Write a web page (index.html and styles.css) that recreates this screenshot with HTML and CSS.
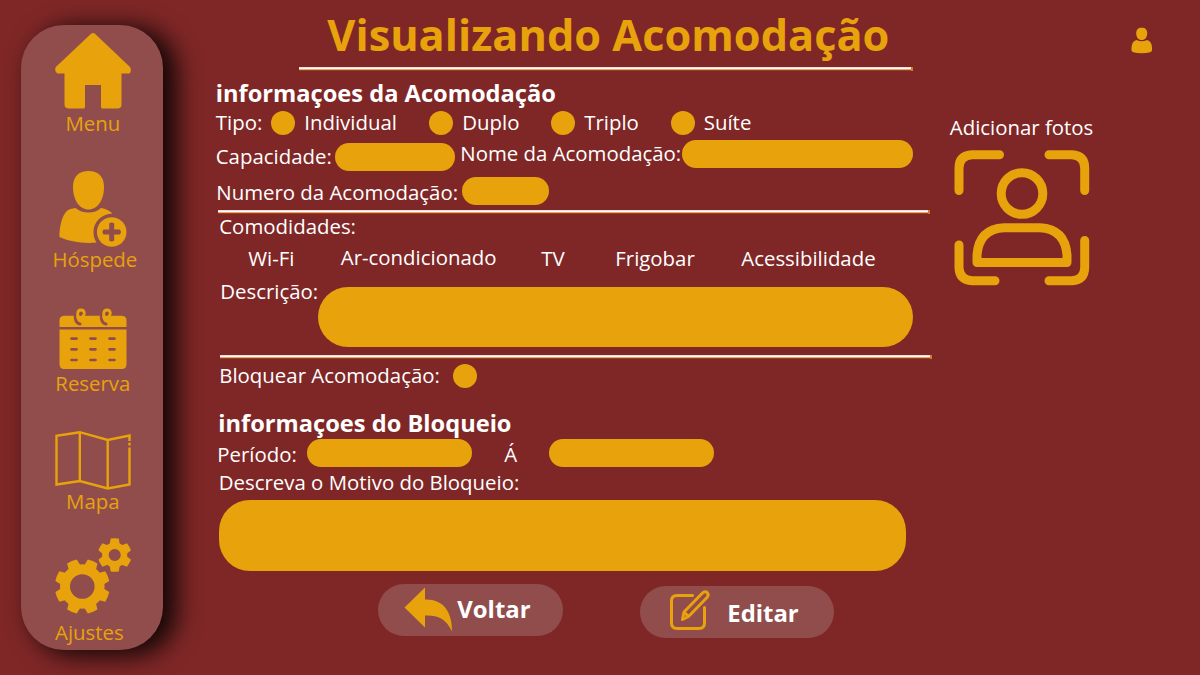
FILE: index.html
```html
<!DOCTYPE html>
<html lang="pt-BR">
<head>
<meta charset="utf-8">
<title>Visualizando Acomodação</title>
<link rel="stylesheet" href="styles.css">
</head>
<body>
<div class="app">
  <nav class="sidebar">
    <a class="nav-item nav-menu">
      <svg width="78" height="78" viewBox="54 32 78 78"><path fill="currentColor" d="M91.300 33.600Q93 32.200 94.700 33.600L130 67Q132 71 129.500 73.500H121.500V104.500Q121.500 108.500 117.500 108.500H102.500Q101 108.500 101 107V85H85V107Q85 108.500 83.500 108.500H69Q64.500 108.500 64.500 104.500V73.500H57.500Q54 71 55.800 67Z"/></svg>
      <span>Menu</span>
    </a>
    <a class="nav-item nav-guest">
      <svg width="70" height="78" viewBox="58 170 70 78"><g fill="currentColor"><path d="M88.500 171C98 171 104 176.500 104 187C104 200 97.500 209.500 88.500 209.500S73 200 73 187C73 176.500 79 171 88.500 171Z"/><path d="M75.500 208Q81 212.500 88.500 212.500T101 208Q108 209 112.500 213.500C101 214 93.500 222 93.500 232Q93.500 238 96.500 242.500C84 244 69 241.500 59.500 237C59.500 225 63 211 70.500 209Z"/><path fill-rule="evenodd" d="M111.700 217.200a14.800 14.800 0 1 0 .01 0ZM109.200 223.500q2.500-2 5 0v6h5.500q2.500 2.500 0 5h-5.500v6q-2.500 2-5 0v-6h-5.500q-2.500-2.500 0-5h5.500Z"/></g></svg>
      <span>Hóspede</span>
    </a>
    <a class="nav-item nav-booking">
      <svg width="70" height="63" viewBox="58 307 70 63"><g fill="currentColor"><path d="M59.500 327V320.500Q59.500 316 64 315.700H122Q126.500 316 126.500 320.500V327Z"/><path d="M59.500 329.500H126.500V364Q126.500 369 122 369H64Q59.500 369 59.500 364Z"/></g><g fill="none" stroke-linecap="round"><path d="M75.300 313.500V318Q76 323.500 80 324M101.300 313.500V318Q102 323.500 106 324" stroke="#904d4c" stroke-width="3"/><path d="M79 317Q84.500 317 84.300 313Q84 310 81 310Q77.700 310 77.700 314V317.500Q78.500 320 81 321M105 317Q110.500 317 110.300 313Q110 310 107 310Q103.700 310 103.700 314V317.500Q104.500 320 107 321" stroke="currentColor" stroke-width="2.800"/><path d="M80.800 313V315M106.800 313V315" stroke="#904d4c" stroke-width="2"/><path d="M71.500 338.600h5M90.500 338.600h5M109.500 338.600h5M71.500 349.300h5M90.500 349.300h5M109.500 349.300h5M71.500 360h5M90.500 360h5M109.500 360h5" stroke="#904d4c" stroke-width="2.700"/></g></svg>
      <span>Reserva</span>
    </a>
    <a class="nav-item nav-map">
      <svg width="80" height="62" viewBox="53 429 80 62"><g fill="none" stroke="currentColor" stroke-width="2.400"><path d="M129.500 441V435.500L107.700 440L79.800 432.200L56.500 435.800V484.500L79.800 481L107.700 488.500L129.500 484.500V447.500M79.800 432V481M107.700 440V488.500"/><path d="M129.500 442.700v2.800" /></g></svg>
      <span>Mapa</span>
    </a>
    <a class="nav-item nav-settings">
      <svg width="80" height="78" viewBox="53 537 80 78"><g fill="none" stroke="currentColor"><circle cx="82.300" cy="586.500" r="17.300" stroke-width="10"/><circle cx="114.700" cy="555" r="9.300" stroke-width="6.500"/></g><g fill="currentColor"><g transform="translate(82.300 586.500) rotate(22.500)"><path id="t" d="M-6.300-20L-5.200-27Q0-28 5.200-27L6.300-20Z"/><use href="#t" transform="rotate(45)"/><use href="#t" transform="rotate(90)"/><use href="#t" transform="rotate(135)"/><use href="#t" transform="rotate(180)"/><use href="#t" transform="rotate(225)"/><use href="#t" transform="rotate(270)"/><use href="#t" transform="rotate(315)"/></g><g transform="translate(114.700 555)"><path id="s" d="M-5-11L-4-16.500Q0-17 4-16.500L5-11Z"/><use href="#s" transform="rotate(60)"/><use href="#s" transform="rotate(120)"/><use href="#s" transform="rotate(180)"/><use href="#s" transform="rotate(240)"/><use href="#s" transform="rotate(300)"/></g></g></svg>
      <span>Ajustes</span>
    </a>
  </nav>

  <main class="content">
    <h1 class="title">Visualizando Acomodação</h1>
    <div class="rule rule-title"></div>

    <h2 class="heading heading-info">informaçoes da Acomodação</h2>
    <div class="row row-type">
      <span class="label-type">Tipo:</span>
      <i class="dot"></i><span>Individual</span>
      <i class="dot"></i><span>Duplo</span>
      <i class="dot"></i><span>Triplo</span>
      <i class="dot"></i><span>Suíte</span>
    </div>
    <div class="row row-capacity">
      <span class="label-capacity">Capacidade:</span><i class="field field-capacity"></i>
      <span class="label-name">Nome da Acomodação:</span><i class="field field-name"></i>
    </div>
    <div class="row row-number"><span>Numero da Acomodação:</span><i class="field"></i></div>
    <div class="rule rule-info"></div>

    <div class="row row-amenities-label"><span>Comodidades:</span></div>
    <div class="row row-amenities">
      <span>Wi-Fi</span><span class="amenity-air">Ar-condicionado</span><span>TV</span><span>Frigobar</span><span>Acessibilidade</span>
    </div>
    <div class="row row-description"><span>Descrição:</span><i class="field field-description"></i></div>
    <div class="rule rule-description"></div>

    <div class="row row-block"><span>Bloquear Acomodação:</span><i class="dot"></i></div>
    <h2 class="heading heading-block">informaçoes do Bloqueio</h2>
    <div class="row row-period"><span>Período:</span><i class="field"></i><span>Á</span><i class="field"></i></div>
    <div class="row row-reason"><span>Descreva o Motivo do Bloqueio:</span></div>
    <i class="field field-reason"></i>

    <div class="actions">
      <a class="button button-back">
        <svg width="50" height="46" viewBox="403 586 50 46"><path fill="currentColor" d="M404.500 607.500L425 587.500V599.500C443 599 452 611 452 631.500C446 618 437 615 425 615.500V627.500Z"/></svg>
        <span>Voltar</span>
      </a>
      <a class="button button-edit">
        <svg width="44" height="44" viewBox="668 588 44 44"><g fill="none" stroke="currentColor" stroke-width="3" stroke-linecap="round" stroke-linejoin="round"><path d="M692.500 595.500H677Q671.500 595.500 671.500 601V623Q671.500 628.500 677 628.500H699Q704.500 628.500 704.500 623V607.500"/><path d="M682.500 619.500L684 612L702.500 593C706 589.500 710 594 707 597.500L688.500 616.500ZM684.500 612.500L688 616"/></g></svg>
        <span>Editar</span>
      </a>
    </div>
  </main>

  <aside class="photos">
    <svg class="avatar" width="24" height="28" viewBox="1130 26 24 28"><g fill="currentColor"><path d="M1141.700 27.700C1145.500 27.700 1147.200 29.700 1147.200 33.500S1145 40 1141.700 40S1136.200 37.300 1136.200 33.500S1138 27.700 1141.700 27.700Z"/><path d="M1136.500 40Q1141.700 42.500 1147 40Q1152 41.500 1152 48V50.500Q1151.500 53.300 1141.700 53.300T1131.500 50.500V48Q1131.500 41.500 1136.500 40Z"/></g></svg>
    <span class="photos-label">Adicionar fotos</span>
    <svg width="140" height="140" viewBox="952 148 140 140"><g fill="none" stroke="currentColor" stroke-width="9" stroke-linecap="round" stroke-linejoin="round"><path d="M999.500 154.700H972Q959 155.500 959 168V190.500M1049 154.700H1072Q1084.700 155.500 1084.700 168V190.500M959 245V267.500Q959.500 280 972 280.700H995M1084.700 240.500V267.500Q1084.500 280 1072 280.700H1049"/><circle cx="1022" cy="193.500" r="20.800"/><path d="M977 262.500V255Q979 229 1004 227.700H1040Q1065 229 1067 255V262.500Z"/></g></svg>
  </aside>
</div>
</body>
</html>
```
FILE: styles.css
```css
* { box-sizing: border-box; }

body {
  margin: 0;
  background: #7f2727;
  color: #fff;
  font-family: "Open Sans", "Noto Sans", sans-serif;
  font-size: 20.400px;
  line-height: 29px;
}

.app { display: flex; width: 1200px; height: 675px; overflow: hidden; }
svg { display: block; flex: none; }
span { white-space: nowrap; flex: none; }

/* sidebar */
.sidebar {
  flex: none;
  width: 142.300px;
  height: 625px;
  margin: 25px 0 0 21.200px;
  padding-top: 7px;
  border-radius: 43px;
  background: #904d4c;
  box-shadow: 12px 4px 24px 2px rgba(0, 0, 0, .85);
  color: #e8a20c;
}
.nav-item { display: flex; flex-direction: column; align-items: center; }
.nav-item svg { margin-left: 1.500px; }
.nav-menu { height: 138px; }
.nav-menu span { margin: -1.200px 0 0 1px; }
.nav-guest { height: 137px; }
.nav-guest span { margin: -2.700px 0 0 5px; }
.nav-booking { height: 122px; }
.nav-booking span { margin: -.700px 0 0 1px; }
.nav-map { height: 108px; }
.nav-map span { margin: -3.700px 0 0 1px; }
.nav-settings span { margin: 3.300px 6px 0 0; }

/* form */
.content { flex: none; width: 735px; margin-left: 51.300px; display: flex; flex-direction: column; }
.title { margin: 4px 0 0 112.500px; font-size: 43.300px; line-height: 61px; height: 63px; white-space: nowrap; color: #e8a20c; }
.rule {
  flex: none;
  height: 4px;
  border-right: 2px solid #d87828;
  background: linear-gradient(#f0dcdc 0 1px, #fff 1px 2px, #f0a060 2px 3px, #96401f 3px);
}
.rule-title { width: 614px; margin-left: 84px; }
.rule-info { width: 712px; margin: 0 0 0 3.500px; }
.rule-description { width: 712px; margin-left: 5px; }
.heading { margin: 0; font-size: 23.650px; line-height: 28px; white-space: nowrap; }
.heading-info { margin: 7.500px 0 0 1px; }
.row { display: flex; flex: none; align-items: flex-start; }
.dot { flex: none; width: 24px; height: 24px; border-radius: 50%; background: #e8a20c; }
.field { flex: none; display: block; height: 27.500px; border-radius: 14px; background: #e8a20c; }

.row-type { display: grid; grid-template-columns: 56.500px 33px 125px 33px 89px 33px 86.500px 33px 100px; height: 31px; margin-top: 1.500px; }
.row-type .label-type { padding-left: 1px; }
.row-type .dot { margin-top: 3px; }
.row-capacity { height: 38px; }
.row-capacity .label-capacity { width: 120px; margin-top: 3px; padding-left: 1px; }
.field-capacity { width: 120.500px; margin-top: 4px; }
.row-capacity .label-name { width: 221.500px; margin-left: 5px; }
.field-name { width: 231.500px; margin-top: 1px; }
.row-number { height: 33px; margin-left: 1.500px; }
.row-number span { width: 245.500px; margin-top: 1px; }
.row-number .field { width: 87.500px; }

.row-amenities-label { margin: -2px 0 0 4.500px; height: 32px; }
.row-amenities { display: grid; grid-template-columns: 92.500px 200.500px 74px 126px 140px; margin-left: 33.500px; height: 33px; }
.amenity-air { margin-top: -1px; }
.row-description { margin-left: 5.500px; height: 78px; }
.row-description span { width: 98px; }
.field-description { width: 595px; height: 60px; margin-top: 10px; border-radius: 30px; }

.row-block { margin: 1.500px 0 0 4.500px; height: 47px; }
.row-block span { width: 234px; }
.row-block .dot { margin-top: 3.500px; }
.heading-block { margin-left: 3.500px; height: 31.500px; line-height: 30px; }
.row-period { display: grid; grid-template-columns: 90px 197px 45px 165px; margin-left: 2.500px; height: 28px; }
.row-period span { margin-top: 1px; }
.row-period .field { width: 165px; }
.row-reason { margin-left: 4px; height: 33px; }
.row-reason span { margin-top: 1px; }
.field-reason { width: 687px; height: 71px; margin-left: 4.500px; border-radius: 31px; }

.actions { display: flex; gap: 77px; margin: 13px 0 0 163.500px; }
.button { display: flex; height: 51.500px; border-radius: 26px; background: #904d4c; font-size: 23.900px; font-weight: 700; }
.button svg { color: #e8a20c; }
.button-back { width: 185px; padding: 2px 0 0 25px; }
.button-back span { margin: 8px 0 0 4px; }
.button-edit { width: 194px; margin-top: 2px; padding: 2px 0 0 28px; }
.button-edit span { margin: 10px 0 0 15px; }

/* photo panel */
.photos { flex: none; width: 250px; display: flex; flex-direction: column; }
.photos svg { margin-left: 2px; color: #e8a20c; }
.photos svg.avatar { margin: 26px 0 59px 180px; }
.photos-label { margin-bottom: 6px; }
```
